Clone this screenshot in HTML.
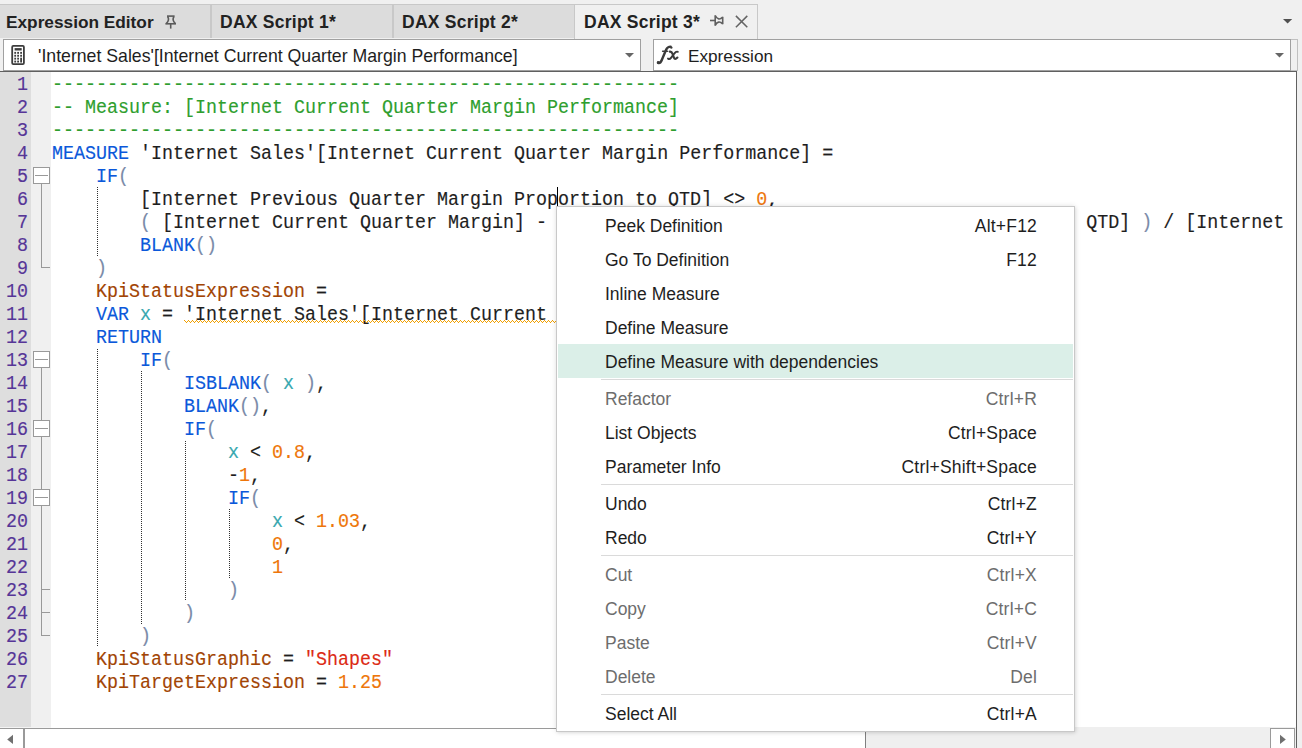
<!DOCTYPE html>
<html><head><meta charset="utf-8">
<style>
*{margin:0;padding:0;box-sizing:border-box}
html,body{width:1302px;height:748px;overflow:hidden;background:#f0f0f0;position:relative;font-family:"Liberation Sans",sans-serif}
div,span,svg{position:absolute}
.tabline{left:0;top:4px;width:758px;height:1px;background:#c8c8c8}
.tab{top:5px;height:33px;background:#dcdcdc}
.sep{top:5px;height:33px;width:2px;background:#c8c8c8}
.tt{top:1px;font-weight:bold;font-size:17.5px;color:#222;line-height:33px;white-space:nowrap}
.active{left:574px;top:4px;width:184px;height:35px;background:#f0f0f0;border:1px solid #c8c8c8;border-bottom:none}
.combo{top:39px;height:32px;background:#fff;border:1px solid #a0a0a0}
.ctext{font-size:17.7px;color:#1e1e1e;white-space:nowrap;line-height:20px}
.editor{left:0;top:71px;width:1297px;height:677px;background:#fff;border-top:1px solid #606060;border-right:1px solid #606060}
.gut{left:0;top:72px;width:31px;height:655px;background:#dedede}
.fold{left:31px;top:72px;width:20px;height:655px;background:#f0f0f0}
.code{left:52px;top:74px;-webkit-text-stroke:0.15px currentColor;transform:scaleX(0.9402);transform-origin:0 0;font-family:"Liberation Mono",monospace;font-size:19.5px;line-height:23px;white-space:pre;color:#1e1e1e}
.code span,.ln span{position:static}
.ln{left:6.4px;top:74px;-webkit-text-stroke:0.15px currentColor;transform:scaleX(0.9402);transform-origin:0 0;font-family:"Liberation Mono",monospace;font-size:19.5px;line-height:23px;color:#563597;white-space:pre}
.k{color:#0b58da}
.c{color:#2e9e2e}
.p{color:#7a8aa8}
.n{color:#ee760a}
.b{color:#a24404}
.s{color:#dc2a14}
.v{color:#38a8b0}
.guide{width:1px;background-image:linear-gradient(to bottom,#303030 50%,transparent 50%);background-size:1px 2px}
.fbox{left:33px;width:17px;height:17px;border:1px solid #999;background:#fff}
.fbox i{position:absolute;left:1px;top:7px;width:13px;height:1px;background:#999}
.fl{left:41px;width:1px;background:#999}
.ft{left:41px;width:9px;height:1px;background:#999}
.menu{left:556px;top:206px;width:519px;height:526px;background:#fff;border:1px solid #c8c8c8;box-shadow:0 0 6px rgba(0,0,0,0.10),1px 1px 3px rgba(0,0,0,0.08)}
.mi{left:1px;width:515px;height:34px;font-size:17.5px;color:#1e1e1e;white-space:nowrap}
.mi .l{left:47px;top:1px;line-height:34px}
.mi .r{right:36px;top:1px;line-height:34px;letter-spacing:0.2px}
.mi.d{color:#6d6d6d}
.msep{left:44px;width:472px;height:1px;background:#dadada}
.hl{background:#dbefe8}
</style></head><body>
<div class="tabline"></div>
<div class="tab" style="left:0;width:210px"><span class="tt" style="left:6px;font-size:17.25px">Expression Editor</span></div>
<div class="sep" style="left:210px"></div>
<div class="tab" style="left:212px;width:180px"><span class="tt" style="left:8px;letter-spacing:0.25px">DAX Script 1*</span></div>
<div class="sep" style="left:392px"></div>
<div class="tab" style="left:394px;width:180px"><span class="tt" style="left:8px;letter-spacing:0.25px">DAX Script 2*</span></div>
<div class="active"><span class="tt" style="left:9px;letter-spacing:0.25px">DAX Script 3*</span></div>
<svg style="left:160px;top:10px" width="22" height="24" viewBox="0 0 22 24"><g fill="none" stroke="#5a5a5a" stroke-width="1.6"><path d="M7 6.1 H14.6"/><path d="M7.6 6.5 Q10 10 6.2 13.6 M14 6.5 Q11.6 10 15.4 13.6"/><path d="M5.4 13.8 H16"/><path d="M10.7 14 V18.6"/></g></svg>
<svg style="left:705px;top:8px" width="22" height="22" viewBox="0 0 22 22"><g fill="none" stroke="#606060" stroke-width="1.6"><path d="M5 12.5 H10"/><path d="M10.2 7.3 V17.7"/><path d="M10.4 7.8 C12 11.6 15 11.8 17.7 9.2 M10.4 17.2 C12 13.4 15 13.2 17.7 15.8"/><path d="M17.7 8.8 V16.2"/></g></svg>
<svg style="left:730px;top:10px" width="24" height="24" viewBox="0 0 24 24"><g stroke="#646464" stroke-width="1.5"><path d="M5.9 5.9 L17.3 17.3 M17.3 5.9 L5.9 17.3"/></g></svg>
<svg style="left:1280px;top:17px" width="14" height="9" viewBox="0 0 14 9"><path d="M3 2 H12.2 L7.6 6.6 Z" fill="#505050"/></svg>
<div class="combo" style="left:3px;width:638px"></div>
<div class="combo" style="left:653px;width:638px"></div>
<div style="left:1291px;top:39px;width:7px;height:32px;border:1px solid #c0c0c0;border-left:none;background:#f0f0f0"></div>
<div class="ctext" style="left:38px;top:46px">'Internet Sales'[Internet Current Quarter Margin Performance]</div>
<div class="ctext" style="left:688px;top:46px;font-size:17.2px">Expression</div>
<svg style="left:8px;top:42px" width="22" height="26" viewBox="0 0 22 26"><g fill="#3c3c3c"><path fill-rule="evenodd" d="M5.3 3 H14.8 Q16.8 3 16.8 5 V21.1 Q16.8 23.1 14.8 23.1 H5.3 Q3.3 23.1 3.3 21.1 V5 Q3.3 3 5.3 3 Z M5.3 4.8 H14.8 Q15 4.8 15 5 V21.1 Q15 21.3 14.8 21.3 H5.3 Q5.1 21.3 5.1 21.1 V5 Q5.1 4.8 5.3 4.8 Z"/><rect x="6.6" y="6.1" width="7.1" height="2.4"/><rect x="6.3" y="9.9" width="1.8" height="1.9"/><rect x="9.2" y="9.9" width="1.8" height="1.9"/><rect x="12.2" y="9.9" width="1.8" height="1.9"/><rect x="6.3" y="12.8" width="1.8" height="1.9"/><rect x="9.2" y="12.8" width="1.8" height="1.9"/><rect x="12.2" y="12.8" width="1.8" height="1.9"/><rect x="6.3" y="15.7" width="1.8" height="1.9"/><rect x="9.2" y="15.7" width="1.8" height="1.9"/><rect x="12.2" y="15.7" width="1.8" height="4.8"/><rect x="6.3" y="18.6" width="1.8" height="1.9"/><rect x="9.2" y="18.6" width="1.8" height="1.9"/></g></svg>
<svg style="left:622px;top:50px" width="14" height="10" viewBox="0 0 14 10"><path d="M3 3 H12 L7.5 7.5 Z" fill="#666"/></svg>
<svg style="left:652px;top:42px" width="34" height="26" viewBox="0 0 34 26"><g fill="none" stroke="#3a3a3a" stroke-linecap="round"><path d="M6 20.8 Q8.6 21.6 10 17.5 L14.2 7.6 Q15.6 4.6 18.6 4.6" stroke-width="2.4"/><path d="M10.6 9.3 H15.5" stroke-width="1.5"/><path d="M17.8 9.6 Q19.6 9.2 20.6 12 L21.9 15.6 Q22.9 18.2 25.4 15.6" stroke-width="2.2"/><path d="M25.8 9.8 Q24.2 9 22.2 11.6 L19 15.8 Q17.6 17.6 16 16.6" stroke-width="1.9"/></g><circle cx="19.3" cy="5.6" r="1.2" fill="#3a3a3a"/><circle cx="6.2" cy="20.4" r="1.3" fill="#3a3a3a"/></svg>
<svg style="left:1272px;top:50px" width="14" height="10" viewBox="0 0 14 10"><path d="M3 3 H12 L7.5 7.5 Z" fill="#666"/></svg>
<div class="editor"></div>
<div class="gut"></div>
<div class="fold"></div>
<div style="left:0;top:727px;width:51px;height:1px;background:#f4f4f4"></div>
<div class="ln"> 1
 2
 3
 4
 5
 6
 7
 8
 9
10
11
12
13
14
15
16
17
18
19
20
21
22
23
24
25
26
27</div>
<div class="code"><span class="c">---------------------------------------------------------</span>
<span class="c">-- Measure: [Internet Current Quarter Margin Performance]</span>
<span class="c">---------------------------------------------------------</span>
<span class="k">MEASURE</span> 'Internet Sales'[Internet Current Quarter Margin Performance] =
    <span class="k">IF</span><span class="p">(</span>
        [Internet Previous Quarter Margin Proportion to QTD] &lt;&gt; <span class="n">0</span>,
        <span class="p">(</span> [Internet Current Quarter Margin] - [Internet Previous Quarter Margin Proportion to QTD] <span class="p">)</span> / [Internet
        <span class="k">BLANK</span><span class="p">()</span>
    <span class="p">)</span>
    <span class="b">KpiStatusExpression</span> =
    <span class="k">VAR</span> <span class="v">x</span> = 'Internet Sales'[Internet Current Quarter Margin Performance]
    <span class="k">RETURN</span>
        <span class="k">IF</span><span class="p">(</span>
            <span class="k">ISBLANK</span><span class="p">(</span> <span class="v">x</span> <span class="p">)</span>,
            <span class="k">BLANK</span><span class="p">()</span>,
            <span class="k">IF</span><span class="p">(</span>
                <span class="v">x</span> &lt; <span class="n">0.8</span>,
                -<span class="n">1</span>,
                <span class="k">IF</span><span class="p">(</span>
                    <span class="v">x</span> &lt; <span class="n">1.03</span>,
                    <span class="n">0</span>,
                    <span class="n">1</span>
                <span class="p">)</span>
            <span class="p">)</span>
        <span class="p">)</span>
    <span class="b">KpiStatusGraphic</span> = <span class="s">"Shapes"</span>
    <span class="b">KpiTargetExpression</span> = <span class="n">1.25</span></div>
<div class="guide" style="left:97px;top:187px;height:69px"></div>
<div class="guide" style="left:97px;top:349px;height:298px"></div>
<div class="guide" style="left:141px;top:371px;height:253px"></div>
<div class="guide" style="left:185px;top:441px;height:160px"></div>
<div class="guide" style="left:229px;top:509px;height:69px"></div>
<div class="fbox" style="top:167px"><i></i></div>
<div class="fl" style="top:184px;height:84px"></div>
<div class="ft" style="top:267px"></div>
<div class="fbox" style="top:351px"><i></i></div>
<div class="fbox" style="top:420px"><i></i></div>
<div class="fbox" style="top:489px"><i></i></div>
<div class="fl" style="top:368px;height:52px"></div>
<div class="fl" style="top:437px;height:52px"></div>
<div class="fl" style="top:506px;height:130px"></div>
<div class="ft" style="top:589px"></div>
<div class="ft" style="top:612px"></div>
<div class="ft" style="top:635px"></div>
<svg style="left:184px;top:320px" width="716" height="3" shape-rendering="crispEdges"><defs><pattern id="zz" width="4" height="3" patternUnits="userSpaceOnUse"><rect x="0" y="0" width="1" height="1" fill="#f2a000"/><rect x="1" y="1" width="1" height="1" fill="#f2a000"/><rect x="2" y="2" width="1" height="1" fill="#f2a000"/><rect x="3" y="1" width="1" height="1" fill="#f2a000"/></pattern></defs><rect width="716" height="3" fill="url(#zz)"/></svg>
<div style="left:557px;top:187px;width:1px;height:20px;background:#000"></div>
<div style="left:0;top:728px;width:866px;height:20px;background:#fff;border-top:1px solid #9a9a9a"></div>
<div style="left:23px;top:728px;width:2px;height:20px;background:#9a9a9a"></div>
<div style="left:865px;top:728px;width:1px;height:20px;background:#808080"></div>
<div style="left:866px;top:727px;width:430px;height:21px;background:#efefef"></div>
<div style="left:1270px;top:728px;width:25px;height:20px;background:#fff;border:1px solid #9a9a9a;border-bottom:none"></div>
<svg style="left:0;top:728px" width="24" height="20" viewBox="0 0 24 20"><path d="M13 6.8 V16 L7.2 11.4 Z" fill="#707070"/></svg>
<svg style="left:1270px;top:728px" width="25" height="20" viewBox="0 0 25 20"><path d="M10 6.8 V16 L15.8 11.4 Z" fill="#707070"/></svg>
<div class="menu">
<div class="mi" style="top:1px"><span class="l">Peek Definition</span><span class="r">Alt+F12</span></div>
<div class="mi" style="top:35px"><span class="l">Go To Definition</span><span class="r">F12</span></div>
<div class="mi" style="top:69px"><span class="l">Inline Measure</span></div>
<div class="mi" style="top:103px"><span class="l">Define Measure</span></div>
<div class="mi hl" style="top:137px"><span class="l">Define Measure with dependencies</span></div>
<div class="msep" style="top:172px"></div>
<div class="mi d" style="top:174px"><span class="l">Refactor</span><span class="r">Ctrl+R</span></div>
<div class="mi" style="top:208px"><span class="l">List Objects</span><span class="r">Ctrl+Space</span></div>
<div class="mi" style="top:242px"><span class="l">Parameter Info</span><span class="r">Ctrl+Shift+Space</span></div>
<div class="msep" style="top:277px"></div>
<div class="mi" style="top:279px"><span class="l">Undo</span><span class="r">Ctrl+Z</span></div>
<div class="mi" style="top:313px"><span class="l">Redo</span><span class="r">Ctrl+Y</span></div>
<div class="msep" style="top:348px"></div>
<div class="mi d" style="top:350px"><span class="l">Cut</span><span class="r">Ctrl+X</span></div>
<div class="mi d" style="top:384px"><span class="l">Copy</span><span class="r">Ctrl+C</span></div>
<div class="mi d" style="top:418px"><span class="l">Paste</span><span class="r">Ctrl+V</span></div>
<div class="mi d" style="top:452px"><span class="l">Delete</span><span class="r">Del</span></div>
<div class="msep" style="top:487px"></div>
<div class="mi" style="top:489px"><span class="l">Select All</span><span class="r">Ctrl+A</span></div>
</div>
</body></html>
